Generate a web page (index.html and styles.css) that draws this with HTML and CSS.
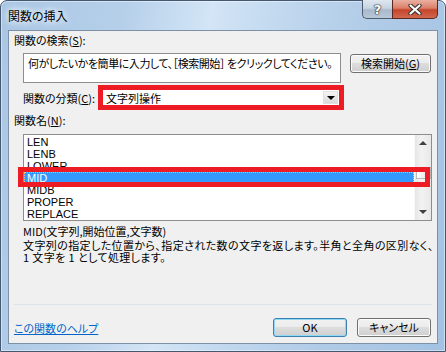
FILE: index.html
```html
<!DOCTYPE html>
<html lang="ja">
  <head>
    <meta charset="UTF-8" />
    <title>関数の挿入</title>
    <link rel="stylesheet" href="styles.css">
  </head>
  <body>
    <div class="window">
      <div class="titlebar">
        <span class="title">関数の挿入</span>
        <div class="caption">
          <span class="cap-help">?</span>
          <span class="cap-close">
            <svg width="14" height="11" viewBox="0 0 14 11">
              <path d="M2.5 1.5 L11.5 9.5 M11.5 1.5 L2.5 9.5" stroke="#333" stroke-width="4.2" stroke-linecap="round" fill="none" />
              <path d="M2.5 1.5 L11.5 9.5 M11.5 1.5 L2.5 9.5" stroke="#fff" stroke-width="2.2" stroke-linecap="round" fill="none" />
            </svg>
          </span>
        </div>
      </div>
      <div class="client">
        <div class="label">関数の検索(<u>S</u>):</div>
        <div class="search-row">
          <div class="search-box">何がしたいかを簡単に入力して、［検索開始］ をクリックしてください。</div>
          <button class="btn search-btn">検索開始(<u>G</u>)</button>
        </div>
        <div class="category-row">
          <span class="category-label">関数の分類(<u>C</u>):</span>
          <div class="combo">
            <span class="combo-text">文字列操作</span>
            <span class="combo-drop"></span>
          </div>
        </div>
        <div class="label name-label">関数名(<u>N</u>):</div>
        <div class="listbox">
          <ul class="items">
            <li>LEN</li>
            <li>LENB</li>
            <li>LOWER</li>
            <li class="selected">MID</li>
            <li>MIDB</li>
            <li>PROPER</li>
            <li>REPLACE</li>
          </ul>
          <div class="scrollbar">
            <span class="arrow up"></span>
            <span class="thumb"></span>
            <span class="arrow down"></span>
          </div>
          <div class="mark"></div>
        </div>
        <div class="syntax">MID(文字列,開始位置,文字数)</div>
        <p class="desc">文字列の指定した位置から、指定された数の文字を返します。半角と全角の区別なく、<br />1 文字を 1 として処理します。</p>
        <div class="footer">
          <a class="help-link" href="#">この関数のヘルプ</a>
          <div class="actions">
            <button class="btn default">OK</button>
            <button class="btn">キャンセル</button>
          </div>
        </div>
      </div>
    </div>
  </body>
</html>
```
FILE: styles.css
```css
* {
  margin: 0;
  padding: 0;
  box-sizing: border-box;
}
body {
  width: 446px;
  height: 352px;
  overflow: hidden;
  background: #fff;
  font-family: "Noto Sans CJK JP", "Liberation Sans", sans-serif;
  font-size: 11px;
  font-feature-settings: "palt";
  color: #000;
}
ul {
  list-style: none;
}
u {
  text-decoration: underline;
}

/* window frame */
.window {
  width: 446px;
  height: 352px;
  border: 1px solid #44586f;
  border-radius: 7px 7px 0 0;
  background: linear-gradient(100deg, #a9c6e4 0%, #b6d0ea 25%, #d3e5f6 42%, #c2d9ef 55%, #b0cbe7 75%, #a3c2e3 100%);
  box-shadow: inset 0 0 0 1px rgba(255, 255, 255, 0.45);
  padding: 0 7px 7px;
  display: flex;
  flex-direction: column;
}
.titlebar {
  height: 29px;
  display: flex;
  justify-content: space-between;
  align-items: flex-start;
}
.title {
  padding-top: 8px;
  font-size: 12px;
  line-height: 14px;
  text-shadow: 0 0 6px #fff, 0 0 10px #fff;
}
.caption {
  display: flex;
  margin-top: -1px;
}
.cap-help,
.cap-close {
  height: 19px;
  display: flex;
  align-items: center;
  justify-content: center;
  border: 1px solid #4c5c6e;
  border-top: none;
}
.cap-help {
  width: 30px;
  border-radius: 0 0 0 5px;
  border-right: none;
  background: linear-gradient(#dfe7f0 0%, #c7d4e2 45%, #a9b9cb 55%, #b9c8d8 100%);
  color: #fff;
  font-family: "DejaVu Sans", sans-serif;
  font-weight: bold;
  font-size: 13px;
  text-shadow: 0 0 1px #222, 0 0 1px #222, 0 0 2px #333;
}
.cap-close {
  width: 46px;
  border-radius: 0 0 5px 0;
  border-color: #5a2a22;
  background: linear-gradient(#eab0a2 0%, #db7f69 45%, #c5452b 55%, #d2684f 100%);
}

/* client area */
.client {
  flex: 1;
  background: #f0f0f0;
  border: 1px solid #7d90a6;
  padding: 2px 5px 6px 5px;
  display: flex;
  flex-direction: column;
}
.label {
  line-height: 14px;
  white-space: nowrap;
}
.search-row {
  display: flex;
  align-items: flex-start;
  margin: 6px 0 0 9px;
}
.search-box {
  width: 318px;
  height: 30px;
  background: #fff;
  border: 1px solid #8d8d8d;
  padding: 2px 4px;
  line-height: 14px;
  letter-spacing: -0.45px;
  white-space: nowrap;
  overflow: hidden;
}
.btn {
  height: 19px;
  border: 1px solid #707070;
  border-radius: 3px;
  background: linear-gradient(#f2f2f2 0%, #ebebeb 50%, #dddddd 50%, #cfcfcf 100%);
  box-shadow: inset 0 0 0 1px #fbfbfb;
  font: inherit;
  font-feature-settings: "palt";
  color: #000;
  line-height: 15px;
  white-space: nowrap;
}
.search-btn {
  width: 81px;
  margin: 1px 0 0 9px;
}

.category-row {
  display: flex;
  align-items: center;
  margin: 2px 0 0 9px;
}
.category-label {
  width: 75px;
  white-space: nowrap;
}
.combo {
  width: 246px;
  height: 25px;
  border: 5px solid #ed1c24;
  background: #fff;
  display: flex;
  align-items: center;
  justify-content: space-between;
  padding: 0 1px 0 3px;
}
.combo-text {
  line-height: 14px;
}
.combo-drop {
  width: 15px;
  height: 13px;
  background: linear-gradient(#f4f4f4, #dadada);
  border: 1px solid #e0e0e0;
  display: flex;
  align-items: center;
  justify-content: center;
}
.combo-drop::after {
  content: "";
  border-left: 4px solid transparent;
  border-right: 4px solid transparent;
  border-top: 4px solid #000;
}

.name-label {
  margin-top: 3px;
}
.listbox {
  position: relative;
  width: 409px;
  height: 87px;
  margin: 7px 0 0 9px;
  background: #fff;
  border: 1px solid #8d8d8d;
  display: flex;
}
.items {
  flex: 1;
  padding-top: 1px;
}
.items li {
  height: 12px;
  line-height: 12px;
  padding-left: 3px;
  font-family: "Liberation Sans", sans-serif;
  font-size: 11px;
}
.items .selected {
  background: #3399ff;
  color: #fff;
  outline: 1px dotted #f5c27a;
  outline-offset: -1px;
}
.scrollbar {
  width: 17px;
  background: linear-gradient(to right, #e6e6e6, #f2f2f2 40%, #e8e8e8);
  border-left: 1px solid #f8f8f8;
  display: flex;
  flex-direction: column;
  align-items: center;
}
.arrow {
  width: 0;
  height: 0;
  border-left: 4px solid transparent;
  border-right: 4px solid transparent;
}
.arrow.up {
  margin-top: 6px;
  border-bottom: 4px solid #404040;
}
.arrow.down {
  margin-top: auto;
  margin-bottom: 6px;
  border-top: 4px solid #404040;
}
.thumb {
  width: 15px;
  height: 12px;
  margin-top: 22px;
  background: linear-gradient(to right, #fdfdfd, #e2e2e2);
  border: 1px solid #b8b8b8;
}
.mark {
  position: absolute;
  left: -6px;
  top: 32px;
  width: 412px;
  height: 20px;
  border: 5px solid #ed1c24;
}

.syntax {
  margin: 4px 0 0 9px;
  line-height: 12px;
}
.desc {
  margin: 2px 0 0 9px;
  line-height: 12px;
  letter-spacing: 0.4px;
  white-space: nowrap;
}

.footer {
  margin-top: auto;
  border-top: 1px solid #dbe4ec;
  padding-top: 13px;
  display: flex;
  justify-content: space-between;
  align-items: center;
}
.help-link {
  color: #0066cc;
  text-decoration: underline;
  line-height: 14px;
}
.actions {
  display: flex;
  gap: 10px;
  margin-right: 1px;
}
.actions .btn {
  width: 74px;
}
.btn.default {
  border-color: #3c7fb1;
  box-shadow: inset 0 0 0 1px #8fd8f6;
}
```
